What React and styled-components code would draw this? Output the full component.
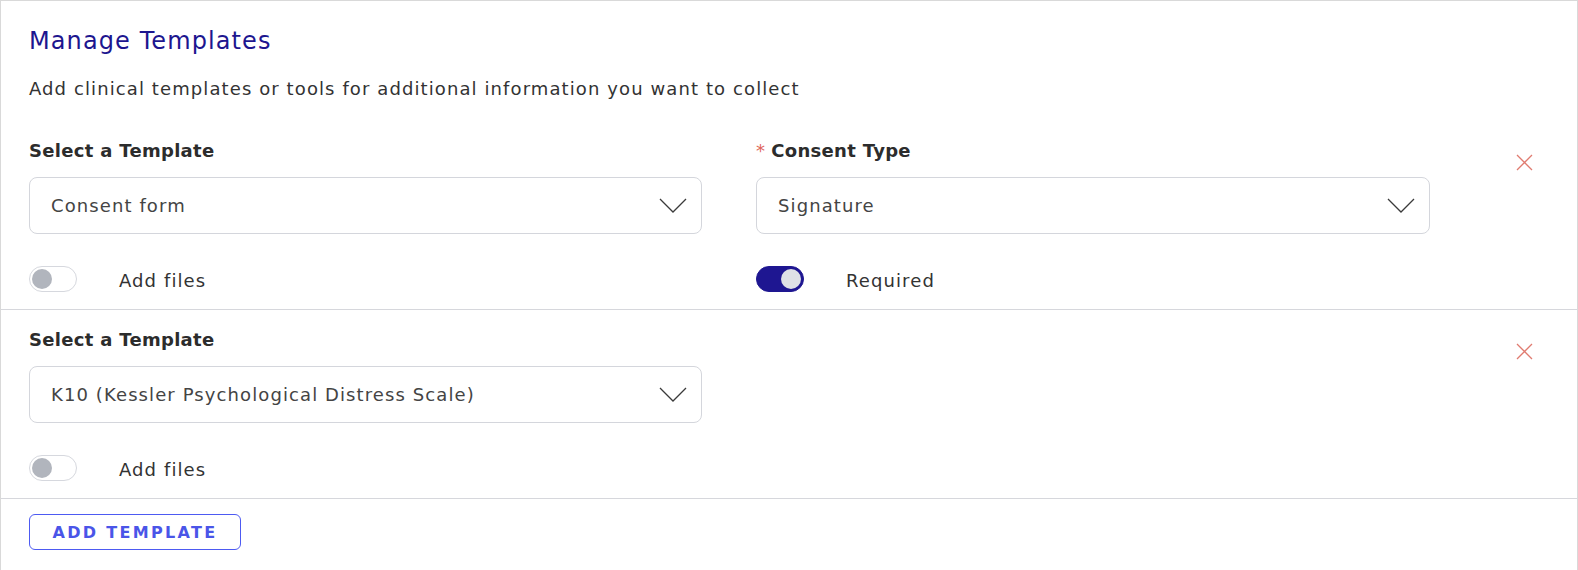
import React from 'react';
import styled, { createGlobalStyle } from 'styled-components';

const GlobalStyle = createGlobalStyle`
  html, body {
    margin: 0;
    padding: 0;
    background: #fff;
  }
  body {
    font-family: "DejaVu Sans", "Noto Sans", sans-serif;
    color: #333;
  }
  * {
    box-sizing: border-box;
  }
`;

const Panel = styled.section`
  display: flex;
  flex-direction: column;
  min-height: 570px;
  border: 1px solid #d9d9d9;
  background: #fff;
`;

const Header = styled.header`
  padding: 25px 28px 20px;
`;

const Title = styled.h2`
  margin: 0;
  font-size: 24px;
  line-height: 30px;
  font-weight: 500;
  letter-spacing: 1.1px;
  color: #1d168f;
`;

const Subtitle = styled.p`
  margin: 21px 0 0;
  font-size: 18px;
  line-height: 24px;
  letter-spacing: 1.1px;
  color: #333;
`;

const TemplateRow = styled.div`
  display: grid;
  grid-template-columns: 673px 674px 1fr;
  column-gap: 54px;
  padding: 19px 28px 17px;
  border-bottom: 1px solid #d6d7dc;
`;

const Field = styled.div`
  display: flex;
  flex-direction: column;
`;

const Label = styled.label`
  font-size: 18px;
  line-height: 22px;
  font-weight: 700;
  letter-spacing: 0.3px;
  color: #2c2c2c;
  margin-bottom: 15px;
`;

const Asterisk = styled.span`
  color: #e0655b;
  margin-right: 6px;
  font-weight: 500;
`;

const SelectBox = styled.div`
  display: flex;
  align-items: center;
  justify-content: space-between;
  height: 57px;
  padding: 0 14px 0 21px;
  border: 1px solid #d4d6dc;
  border-radius: 8px;
  background: #fff;
  font-size: 18px;
  letter-spacing: 1.1px;
  color: #444;
  cursor: pointer;
`;

const ToggleRow = styled.div`
  display: flex;
  align-items: center;
  gap: 42px;
  height: 26px;
  margin-top: 32px;
  font-size: 18px;
  letter-spacing: 1.1px;
  color: #333;

  span:last-child {
    padding-top: 3px;
  }
`;

const Switch = styled.span`
  position: relative;
  display: inline-block;
  width: 48px;
  height: 26px;
  border-radius: 13px;
  border: 1px solid ${p => (p.$on ? '#1e1691' : '#d6d8de')};
  background: ${p => (p.$on ? '#1e1691' : '#fff')};
  flex-shrink: 0;

  &::after {
    content: '';
    position: absolute;
    top: 2px;
    left: ${p => (p.$on ? '24px' : '2px')};
    width: 20px;
    height: 20px;
    border-radius: 50%;
    background: ${p => (p.$on ? '#dfe1e6' : '#b1b5bd')};
  }
`;

const RemoveButton = styled.button`
  justify-self: end;
  align-self: start;
  margin-top: 14px;
  margin-right: 16px;
  padding: 0;
  width: 17px;
  height: 17px;
  border: none;
  background: none;
  cursor: pointer;
  display: flex;
`;

const Footer = styled.footer`
  flex: 1;
  padding: 15px 28px 20px;
`;

const AddButton = styled.button`
  height: 36px;
  width: 212px;
  border: 1px solid #4d5af2;
  border-radius: 6px;
  background: #fff;
  color: #4a55e8;
  font-family: inherit;
  font-size: 16px;
  font-weight: 600;
  letter-spacing: 2.3px;
  cursor: pointer;
`;

const Chevron = () => (
  <svg width="28" height="15" viewBox="0 0 28 15" fill="none">
    <path d="M1 1L14 14L27 1" stroke="#3a3a3a" strokeWidth="1.3" />
  </svg>
);

const Cross = () => (
  <svg width="17" height="17" viewBox="0 0 17 17" fill="none">
    <path d="M1 1L16 16M16 1L1 16" stroke="#e07b70" strokeWidth="1.3" />
  </svg>
);

const Select = ({ value }) => (
  <SelectBox>
    <span>{value}</span>
    <Chevron />
  </SelectBox>
);

const Toggle = ({ on, label }) => (
  <ToggleRow>
    <Switch $on={on} />
    <span>{label}</span>
  </ToggleRow>
);

const templates = [
  { id: 1, name: 'Consent form', consent: 'Signature', required: true },
  { id: 2, name: 'K10 (Kessler Psychological Distress Scale)' },
];

export default function App() {
  return (
    <>
      <GlobalStyle />
      <Panel>
        <Header>
          <Title>Manage Templates</Title>
          <Subtitle>Add clinical templates or tools for additional information you want to collect</Subtitle>
        </Header>
        {templates.map(t => (
          <TemplateRow key={t.id}>
            <Field>
              <Label>Select a Template</Label>
              <Select value={t.name} />
              <Toggle label="Add files" />
            </Field>
            {t.consent ? (
              <Field>
                <Label>
                  <Asterisk>*</Asterisk>Consent Type
                </Label>
                <Select value={t.consent} />
                <Toggle on={t.required} label="Required" />
              </Field>
            ) : (
              <div />
            )}
            <RemoveButton aria-label="Remove template">
              <Cross />
            </RemoveButton>
          </TemplateRow>
        ))}
        <Footer>
          <AddButton>ADD TEMPLATE</AddButton>
        </Footer>
      </Panel>
    </>
  );
}
